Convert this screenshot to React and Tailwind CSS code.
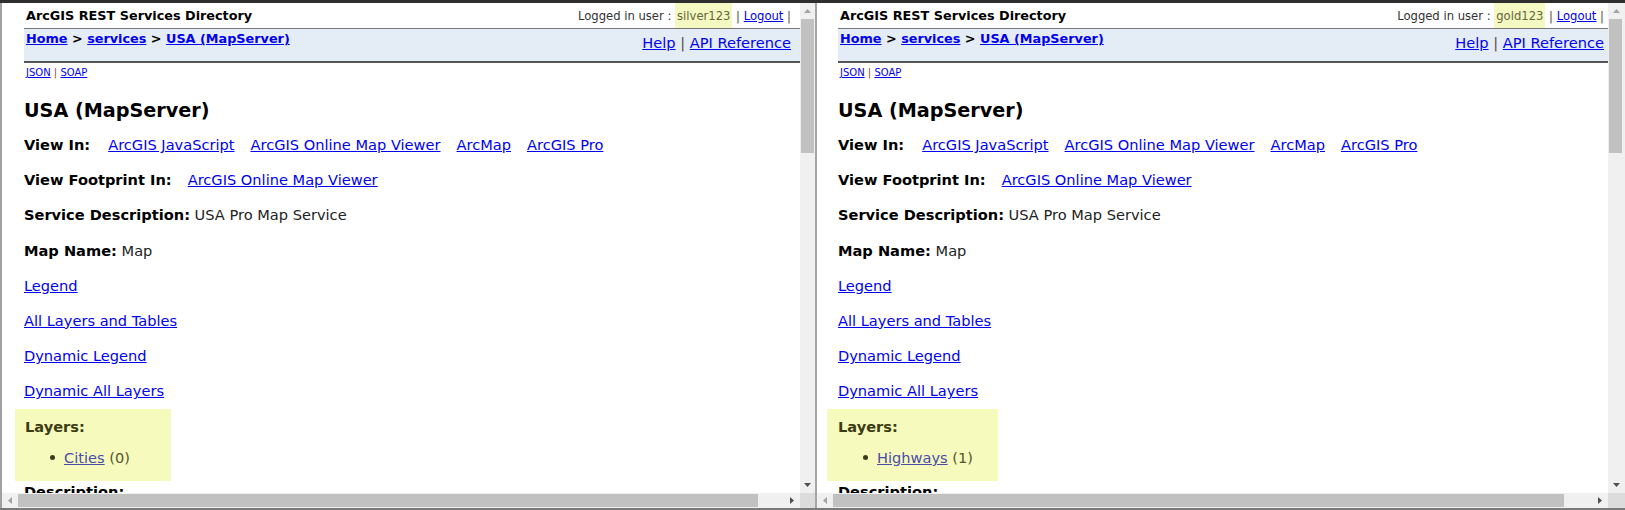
import React from "react";

function Arrow({ dir, dark }) {
  const fill = dark ? "#505050" : "#a3a3a3";
  const pts = {
    up: "0,4 3.5,0 7,4",
    down: "0,0 7,0 3.5,4",
    left: "4,0 4,7 0,3.5",
    right: "0,0 0,7 4,3.5",
  }[dir];
  const w = dir === "up" || dir === "down" ? 7 : 4;
  const h = dir === "up" || dir === "down" ? 4 : 7;
  return (
    <svg width={w} height={h} viewBox={`0 0 ${w} ${h}`}>
      <polygon points={pts} fill={fill} />
    </svg>
  );
}

function Panel({ user, layer, count, right }) {
  const contentW = right ? "w-[791px]" : "w-[798px]";
  const vW = right ? "w-[17px]" : "w-[15px]";
  const padL = right ? "pl-[21px]" : "pl-[22px]";
  const padR = right ? "pr-[4px]" : "pr-[9px]";
  const boxCls = right
    ? "-ml-[11px] w-[171px] pl-[11px]"
    : "-ml-[9px] w-[156px] pl-[10px]";
  const thumbW = right ? "w-[731px]" : "w-[740px]";
  return (
    <div className="flex flex-col">
      <div className="flex h-[490px]">
        <div className={`${contentW} h-full overflow-hidden bg-white`}>
          <div className={padL}>
            <div className={`flex h-[25px] items-center justify-between ${padR}`}>
              <div className="pl-[2px] text-[12.8px] font-bold leading-[16px] text-black">
                ArcGIS REST Services Directory
              </div>
              <div className="flex h-full items-center text-[11.6px] leading-[16px] text-[#333]">
                <span>Logged in user :&nbsp;</span>
                <span className="flex h-full items-center bg-[#f4f9c1] px-[2px] text-[#66663c]">
                  {user}
                </span>
                <span className="text-[#5a4a40]">&nbsp;|&nbsp;</span>
                <span className="text-[#0000ee] underline">Logout</span>
                <span className="text-[#5a4a40]">&nbsp;|</span>
              </div>
            </div>
            <div
              className={`flex h-[35px] justify-between border-t border-b-2 border-t-[#777] border-b-[#555] bg-[#e4ecf6] ${padR}`}
            >
              <div className="pl-[2px] pt-[2px] text-[12.8px] font-bold leading-[16px] text-black">
                <span className="text-[#0000ee] underline">Home</span>
                <span> &gt; </span>
                <span className="text-[#0000ee] underline">services</span>
                <span> &gt; </span>
                <span className="text-[#0000ee] underline">USA (MapServer)</span>
              </div>
              <div className="pt-[5px] text-[14.6px] leading-[18px]">
                <span className="text-[#0000ee] underline">Help</span>
                <span className="text-[#5a4a40]"> | </span>
                <span className="text-[#0000ee] underline">API Reference</span>
              </div>
            </div>
            <div className="mt-[4px] pl-[2px] text-[10px] leading-[12px]">
              <span className="text-[#0000ee] underline">JSON</span>
              <span className="text-[#8b4a3a]"> | </span>
              <span className="text-[#0000ee] underline">SOAP</span>
            </div>
            <div className="mt-[20px] text-[19.2px] font-bold leading-[23px] text-black">
              USA (MapServer)
            </div>
            <div className="mt-[5.4px] text-[14.6px] leading-[18px] text-[#222]">
              <div className="flex h-[35.2px] items-center">
                <span className="font-bold text-black">View In:</span>
                <div className="ml-[18px] flex gap-[16px]">
                  <span className="text-[#0000ee] underline">ArcGIS JavaScript</span>
                  <span className="text-[#0000ee] underline">ArcGIS Online Map Viewer</span>
                  <span className="text-[#0000ee] underline">ArcMap</span>
                  <span className="text-[#0000ee] underline">ArcGIS Pro</span>
                </div>
              </div>
              <div className="flex h-[35.2px] items-center">
                <span className="font-bold text-black">View Footprint In:</span>
                <span className="ml-[16px] text-[#0000ee] underline">ArcGIS Online Map Viewer</span>
              </div>
              <div className="flex h-[35.2px] items-center">
                <span className="font-bold text-black">Service Description:</span>
                <span>&nbsp;USA Pro Map Service</span>
              </div>
              <div className="flex h-[35.2px] items-center">
                <span className="font-bold text-black">Map Name:</span>
                <span>&nbsp;Map</span>
              </div>
              <div className="flex h-[35.2px] items-center">
                <span className="text-[#0000ee] underline">Legend</span>
              </div>
              <div className="flex h-[35.2px] items-center">
                <span className="text-[#0000ee] underline">All Layers and Tables</span>
              </div>
              <div className="flex h-[35.2px] items-center">
                <span className="text-[#0000ee] underline">Dynamic Legend</span>
              </div>
              <div className="flex h-[35.2px] items-center">
                <span className="text-[#0000ee] underline">Dynamic All Layers</span>
              </div>
              <div className={`${boxCls} h-[72px] bg-[#f6fabc] pt-[9px]`}>
                <div className="font-bold leading-[18px] text-[#3c3c14]">Layers:</div>
                <div className="mt-[13px] flex items-center pl-[25px] leading-[18px] text-[#55552e]">
                  <span className="h-[5px] w-[5px] rounded-full bg-[#3c3c1c]" />
                  <span className="ml-[9px] text-[#4b4bab] underline">{layer}</span>
                  <span>&nbsp;({count})</span>
                </div>
              </div>
              <div className="pt-[2px] font-bold leading-[18px] text-black">Description:</div>
            </div>
          </div>
        </div>
        <div className={`${vW} flex h-full flex-col bg-[#f0f0f0]`}>
          <div className="flex h-[16px] items-center justify-center">
            <Arrow dir="up" />
          </div>
          <div className="ml-[1px] h-[134px] w-[13px] bg-[#c1c1c1]" />
          <div className="flex-1" />
          <div className="flex h-[16px] items-center justify-center">
            <Arrow dir="down" dark />
          </div>
        </div>
      </div>
      <div className="flex h-[15px]">
        <div className={`${contentW} flex h-full items-center bg-[#f0f0f0]`}>
          <div className="flex h-full w-[16px] items-center justify-center">
            <Arrow dir="left" />
          </div>
          <div className={`${thumbW} h-[13px] bg-[#c1c1c1]`} />
          <div className="flex-1" />
          <div className="flex h-full w-[16px] items-center justify-center">
            <Arrow dir="right" dark />
          </div>
        </div>
        <div className={`${vW} h-full bg-[#dcdcdc]`} />
      </div>
    </div>
  );
}

export default function App() {
  return (
    <div className="h-[510px] w-[1625px] overflow-hidden bg-white font-['DejaVu_Sans',Verdana,sans-serif]">
      <div className="h-[3px] bg-[#2e2e2e]" />
      <div className="flex h-[505px]">
        <div className="w-[2px] bg-[#a0a0a0]" />
        <Panel user="silver123" layer="Cities" count="0" />
        <div className="w-[2px] bg-[#a5a5a5]" />
        <Panel user="gold123" layer="Highways" count="1" right />
      </div>
      <div className="h-[2px] bg-[#7a7a7a]" />
    </div>
  );
}
